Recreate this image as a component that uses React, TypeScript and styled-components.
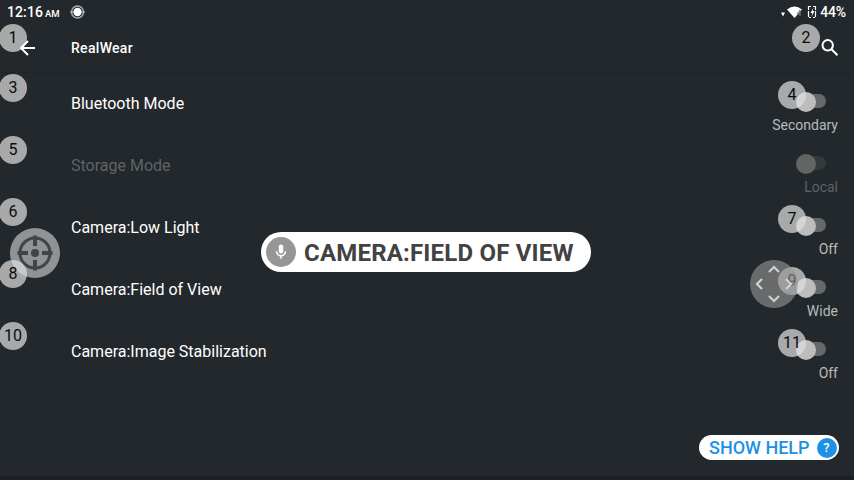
import React from 'react';
import styled, { createGlobalStyle } from 'styled-components';

const Global = createGlobalStyle`
  *{box-sizing:border-box}
  body{margin:0;background:#23282c;font-family:Roboto,sans-serif;color:#fff;overflow:hidden}
`;
const Screen = styled.main`
  position:relative;width:854px;height:480px;overflow:hidden;display:flex;flex-direction:column;
  background:#23282c;border-bottom:4px solid #1d1f25;
`;
const StatusBar = styled.div`
  height:24px;flex:none;display:flex;align-items:center;padding:0 8px 0 7px;font-size:14px;font-weight:500;
`;
const Clock = styled.span`
  letter-spacing:.1px;
  small{font-size:9.5px;margin-left:2px;letter-spacing:0}
`;
const RecordIcon = styled.svg`margin-left:10px;`;
const StatusIcons = styled.div`margin-left:auto;display:flex;align-items:center;`;
const Battery = styled.span`margin-left:3px;letter-spacing:-.15px;`;
const Header = styled.header`
  position:relative;height:49px;flex:none;display:flex;align-items:center;border-bottom:1px solid #202428;padding:0 15px 0 17px;
`;
const BackIcon = styled.svg`position:relative;z-index:4;`;
const Title = styled.h1`margin:0 auto 0 32px;font-size:14px;font-weight:500;letter-spacing:.3px;`;
const List = styled.ul`margin:0;padding:0;list-style:none;`;
const Row = styled.li<{ $off?: boolean }>`
  position:relative;height:62px;display:flex;justify-content:space-between;padding:0 16px 0 71px;color:${p => p.$off ? '#5f6366' : '#fff'};
`;
const Label = styled.span`font-size:16px;line-height:20px;margin-top:21px;`;
const Control = styled.div`display:flex;flex-direction:column;align-items:flex-end;`;
const Value = styled.span<{ $off?: boolean }>`
  font-size:14px;line-height:18px;margin-top:8px;color:${p => p.$off ? '#5f6366' : '#b9bbbc'};
`;
const Track = styled.div<{ $off?: boolean }>`
  position:relative;z-index:2;width:28px;height:14px;border-radius:7px;margin:21px 12px 0 0;background:${p => p.$off ? '#34393c' : '#65696b'};
`;
const Thumb = styled.div<{ $off?: boolean }>`
  position:absolute;left:-2.5px;top:-2.5px;width:20px;height:20px;border-radius:50%;background:${p => p.$off ? '#636464' : '#bdbdbd'};
`;
const Badge = styled.span<{ $x: number; $y: number }>`
  position:absolute;z-index:3;left:${p => p.$x}px;top:${p => p.$y}px;width:28px;height:28px;border-radius:50%;
  background:rgba(224,224,224,.7);color:#0b0b0b;font-size:16px;line-height:27px;text-align:center;
`;
const Floating = styled.div<{ $x: number; $y: number; $size: number; $bg: string; $layer: number }>`
  position:absolute;z-index:${p => p.$layer};left:${p => p.$x}px;top:${p => p.$y}px;width:${p => p.$size}px;height:${p => p.$size}px;
  border-radius:50%;background:${p => p.$bg};
  svg{display:block}
`;
const Command = styled.div`
  position:absolute;z-index:5;left:261px;top:232px;width:330px;height:40px;border-radius:20px;background:#fff;
  display:flex;align-items:center;padding-left:5px;color:#424242;font-size:24px;font-weight:700;letter-spacing:.2px;white-space:nowrap;
`;
const Phrase = styled.span`padding-top:2px;`;
const Mic = styled.span`
  width:30px;height:30px;border-radius:50%;background:#969696;display:grid;place-items:center;margin-right:8px;
`;
const Help = styled.button`
  position:absolute;z-index:5;right:15px;bottom:16px;width:140px;height:25px;border:0;border-radius:13px;background:#fff;
  display:flex;align-items:center;justify-content:space-between;padding:0 2.5px 0 10px;color:#1e90e5;font:500 18px Roboto,sans-serif;white-space:nowrap;
`;
const Question = styled.span`
  width:20px;height:20px;border-radius:50%;background:#1e90e5;color:#fff;font-size:13px;line-height:20px;text-align:center;
`;

const rows = [
  { label: 'Bluetooth Mode', value: 'Secondary', left: 3, right: 4 },
  { label: 'Storage Mode', value: 'Local', left: 5, off: true },
  { label: 'Camera:Low Light', value: 'Off', left: 6, right: 7 },
  { label: 'Camera:Field of View', value: 'Wide', left: 8, right: 9 },
  { label: 'Camera:Image Stabilization', value: 'Off', left: 10, right: 11 },
];

export default function App() {
  return (
    <Screen>
      <Global />
      <StatusBar>
        <Clock>12:16<small>AM</small></Clock>
        <RecordIcon width="15" height="14" viewBox="0 0 15 14" fill="none">
          <circle cx="7.5" cy="7" r="6" stroke="#a9acad" strokeWidth="1.4" />
          <circle cx="7.5" cy="7" r="4.2" fill="#fff" />
          <path d="M0 7h3M12 7h3" stroke="#c5c7c8" />
        </RecordIcon>
        <StatusIcons>
          <svg width="37" height="16" viewBox="0 0 37 16">
            <path d="M1 8.500h4L3 12.500z" fill="#fff" />
            <path d="M7 5.500Q14.500 -.5 22 5.500L14.500 14z" fill="#fff" />
            <path d="M20 6l-3 4h4M20 6v6" fill="none" stroke="#777b7d" />
            <path d="M31 2.500h-2.500v11h2.500M33 2.500h2.500v11H33" fill="none" stroke="#fff" strokeWidth="1.200" strokeDasharray="6 1" />
            <path d="M33.500 3.500l-3 5.500h1.800l-1 4 3.200-6h-2z" fill="#fff" />
          </svg>
          <Battery>44%</Battery>
        </StatusIcons>
      </StatusBar>
      <Header>
        <BackIcon width="22" height="22" viewBox="0 0 22 22" fill="none" stroke="#fff" strokeWidth="2"><path d="M18 11H4.500M11 4l-7 7 7 7" /></BackIcon>
        <Title>RealWear</Title>
        <svg width="20" height="20" viewBox="0 0 20 20" fill="none" stroke="#fff" strokeWidth="2"><circle cx="8.700" cy="7.300" r="5.200" /><path d="M12.500 11.300l6 6" /></svg>
        <Badge $x={-1} $y={0}>1</Badge>
        <Badge $x={792} $y={0}>2</Badge>
      </Header>
      <List>
        {rows.map(r => (
          <Row key={r.label} $off={r.off}>
            <Label>{r.label}</Label>
            <Control>
              <Track $off={r.off}><Thumb $off={r.off} /></Track>
              <Value $off={r.off}>{r.value}</Value>
            </Control>
            <Badge $x={-1} $y={1}>{r.left}</Badge>
            {r.right && <Badge $x={778} $y={8}>{r.right}</Badge>}
          </Row>
        ))}
      </List>
      <Floating $x={10} $y={228} $size={50} $layer={2} $bg="rgba(190,193,195,.7)">
        <svg width="50" height="50" viewBox="0 0 50 50" fill="none" stroke="#424446" strokeWidth="3">
          <circle cx="25" cy="25" r="15" /><path d="M25 7.500v10.500M25 32v10.500M7.500 25h10.500M32 25h10.500" strokeWidth="4" />
          <circle cx="25" cy="25" r="4" fill="#424446" stroke="none" />
        </svg>
      </Floating>
      <Floating $x={750} $y={260} $size={48} $layer={4} $bg="rgba(150,150,150,.6)">
        <svg width="48" height="48" viewBox="0 0 48 48" fill="none" stroke="#d0d1d1" strokeWidth="2.200">
          <path d="M19 12l5-5 5 5M19 36l5 5 5-5M12 19l-5 5 5 5M36 19l5 5-5 5" />
        </svg>
      </Floating>
      <Command>
        <Mic>
          <svg width="18" height="18" viewBox="0 0 24 24" fill="#fff"><path d="M12 14c1.660 0 3-1.340 3-3V5c0-1.660-1.340-3-3-3S9 3.340 9 5v6c0 1.660 1.340 3 3 3zm5-3c0 2.760-2.240 5-5 5s-5-2.240-5-5H5c0 3.530 2.610 6.430 6 6.920V21h2v-3.080c3.390-.49 6-3.390 6-6.920h-2z" /></svg>
        </Mic>
        <Phrase>CAMERA:FIELD OF VIEW</Phrase>
      </Command>
      <Help>SHOW HELP<Question>?</Question></Help>
    </Screen>
  );
}
